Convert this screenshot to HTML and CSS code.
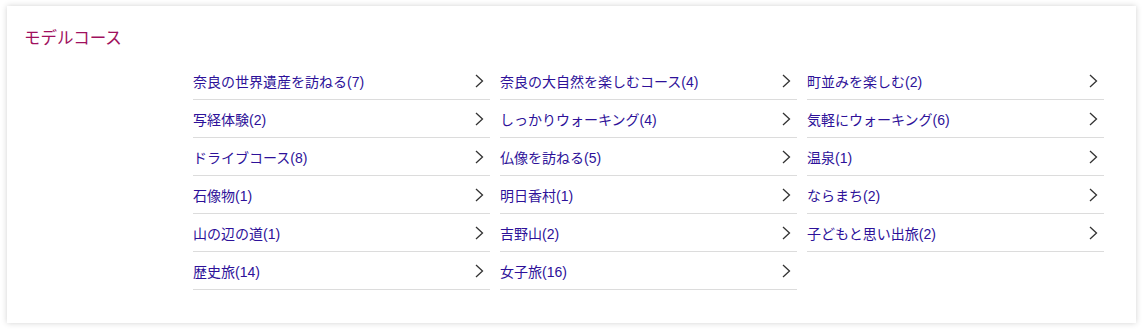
FILE: index.html
```html
<!DOCTYPE html>
<html lang="ja">
<head>
    <meta charset="UTF-8">
    <title>モデルコース</title>
    <link rel="stylesheet" href="styles.css">
</head>
<body>
    <div class="course-box">
        <h2 class="course-title">モデルコース</h2>
        <ul class="course-list">
            <li><a href="#">奈良の世界遺産を訪ねる(7)<svg class="arrow" viewBox="0 0 10 14"><polyline points="2,1 8.5,7 2,13"/></svg></a></li>
            <li><a href="#">奈良の大自然を楽しむコース(4)<svg class="arrow" viewBox="0 0 10 14"><polyline points="2,1 8.5,7 2,13"/></svg></a></li>
            <li><a href="#">町並みを楽しむ(2)<svg class="arrow" viewBox="0 0 10 14"><polyline points="2,1 8.5,7 2,13"/></svg></a></li>
            <li><a href="#">写経体験(2)<svg class="arrow" viewBox="0 0 10 14"><polyline points="2,1 8.5,7 2,13"/></svg></a></li>
            <li><a href="#">しっかりウォーキング(4)<svg class="arrow" viewBox="0 0 10 14"><polyline points="2,1 8.5,7 2,13"/></svg></a></li>
            <li><a href="#">気軽にウォーキング(6)<svg class="arrow" viewBox="0 0 10 14"><polyline points="2,1 8.5,7 2,13"/></svg></a></li>
            <li><a href="#">ドライブコース(8)<svg class="arrow" viewBox="0 0 10 14"><polyline points="2,1 8.5,7 2,13"/></svg></a></li>
            <li><a href="#">仏像を訪ねる(5)<svg class="arrow" viewBox="0 0 10 14"><polyline points="2,1 8.5,7 2,13"/></svg></a></li>
            <li><a href="#">温泉(1)<svg class="arrow" viewBox="0 0 10 14"><polyline points="2,1 8.5,7 2,13"/></svg></a></li>
            <li><a href="#">石像物(1)<svg class="arrow" viewBox="0 0 10 14"><polyline points="2,1 8.5,7 2,13"/></svg></a></li>
            <li><a href="#">明日香村(1)<svg class="arrow" viewBox="0 0 10 14"><polyline points="2,1 8.5,7 2,13"/></svg></a></li>
            <li><a href="#">ならまち(2)<svg class="arrow" viewBox="0 0 10 14"><polyline points="2,1 8.5,7 2,13"/></svg></a></li>
            <li><a href="#">山の辺の道(1)<svg class="arrow" viewBox="0 0 10 14"><polyline points="2,1 8.5,7 2,13"/></svg></a></li>
            <li><a href="#">吉野山(2)<svg class="arrow" viewBox="0 0 10 14"><polyline points="2,1 8.5,7 2,13"/></svg></a></li>
            <li><a href="#">子どもと思い出旅(2)<svg class="arrow" viewBox="0 0 10 14"><polyline points="2,1 8.5,7 2,13"/></svg></a></li>
            <li><a href="#">歴史旅(14)<svg class="arrow" viewBox="0 0 10 14"><polyline points="2,1 8.5,7 2,13"/></svg></a></li>
            <li><a href="#">女子旅(16)<svg class="arrow" viewBox="0 0 10 14"><polyline points="2,1 8.5,7 2,13"/></svg></a></li>
        </ul>
    </div>
</body>
</html>
```

FILE: styles.css
```css
* {
    box-sizing: border-box;
    margin: 0;
    padding: 0;
}

body {
    background: #fff;
    font-family: "Liberation Sans", "Noto Sans CJK JP", sans-serif;
    padding: 6px 8px 8px 7px;
}

/* 枠 */
.course-box {
    background: #fff;
    height: 317px;
    padding: 20px 32px 0 17px;
    box-shadow: 0 0 6px rgba(0, 0, 0, 0.18);
}

.course-title {
    color: #a0105e;
    font-size: 16.5px;
    font-weight: normal;
    line-height: 24px;
    margin-bottom: 12px;
}

/* 一覧 */
.course-list {
    list-style: none;
    display: grid;
    grid-template-columns: repeat(3, 1fr);
    column-gap: 10px;
    margin-left: 169px;
}

.course-list li {
    border-bottom: 1px solid #dcdcdc;
}

.course-list a {
    display: flex;
    align-items: center;
    justify-content: space-between;
    height: 37px;
    padding-right: 6px;
    color: #2d1199;
    font-size: 14px;
    text-decoration: none;
}

.arrow {
    width: 10px;
    height: 14px;
    margin-top: 1px;
    fill: none;
    stroke: #333;
    stroke-width: 1.3;
}
```
